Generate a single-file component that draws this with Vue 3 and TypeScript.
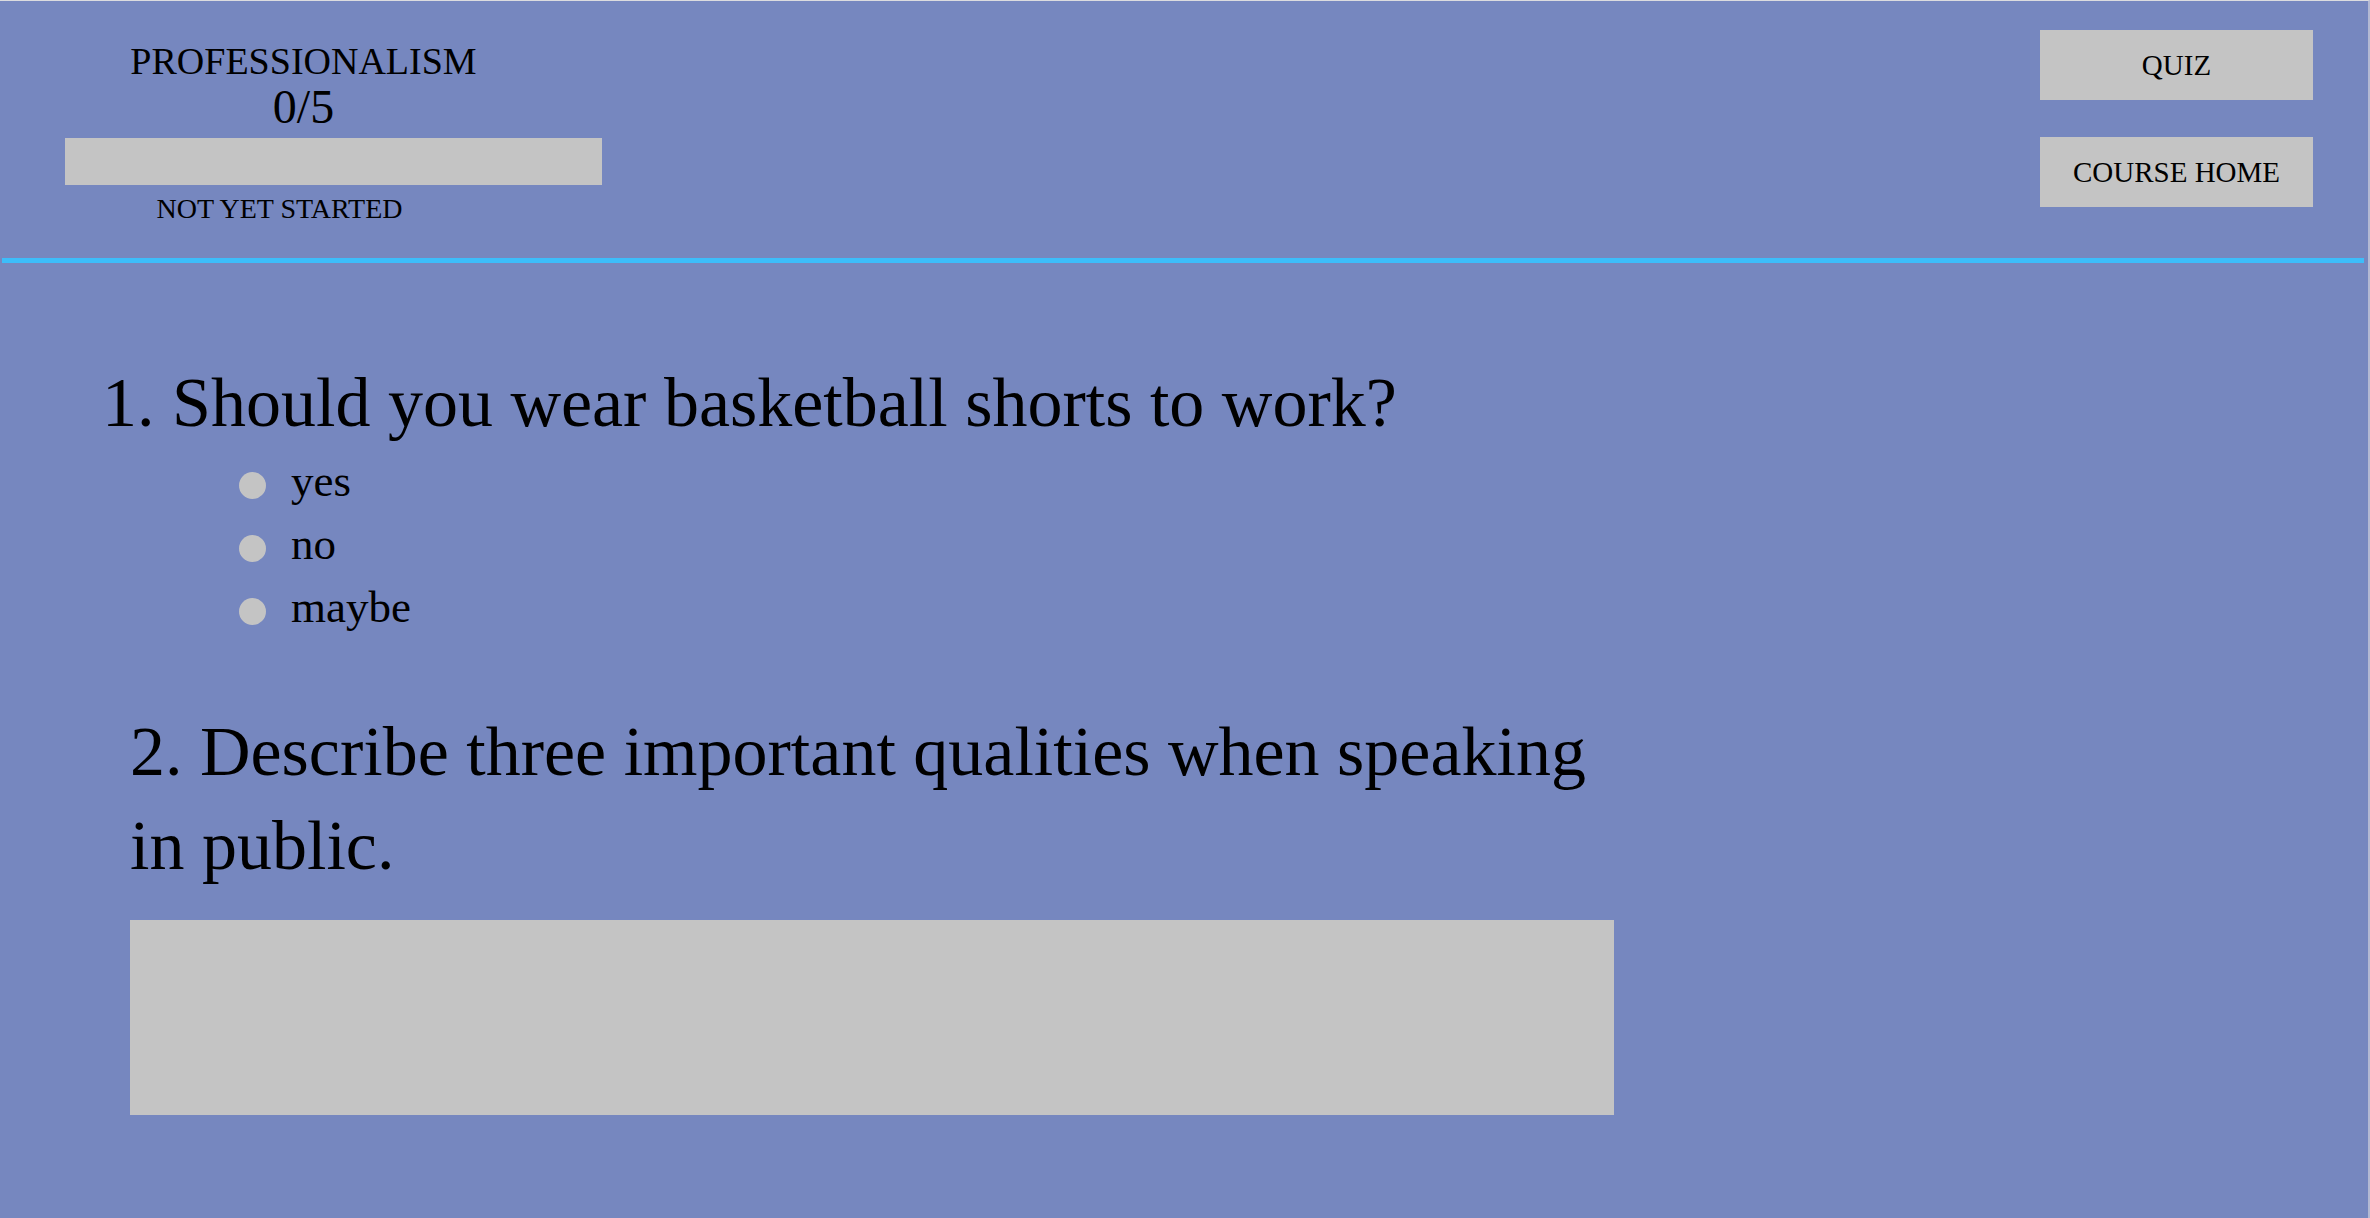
<script setup lang="ts">
import { ref } from 'vue'

const total = 5
const done = ref(0)
const options: string[] = ['yes', 'no', 'maybe']
const choice = ref('')
const answer = ref('')
</script>

<template>
  <div class="page">
    <header class="header">
      <section class="progress">
        <h1 class="title">PROFESSIONALISM</h1>
        <p class="score">{{ done }}/{{ total }}</p>
        <div class="bar" role="progressbar" aria-label="Course progress" :aria-valuenow="done" :aria-valuemax="total">
          <div class="fill" :style="{ width: (done / total) * 100 + '%' }"></div>
        </div>
        <p class="status">NOT YET STARTED</p>
      </section>
      <nav class="actions">
        <button type="button">QUIZ</button>
        <button type="button">COURSE HOME</button>
      </nav>
    </header>

    <main class="quiz">
      <fieldset class="choices">
        <legend class="question">1. Should you wear basketball shorts to work?</legend>
        <label v-for="option in options" :key="option" class="option">
          <input v-model="choice" type="radio" name="shorts" :value="option" />
          <span>{{ option }}</span>
        </label>
      </fieldset>

      <div class="written">
        <label class="question" for="qualities">2. Describe three important qualities when speaking in public.</label>
        <textarea id="qualities" v-model="answer"></textarea>
      </div>
    </main>
  </div>
</template>

<style>
body {
  margin: 0;
  background: #7687bf;
}
</style>

<style scoped>
.page {
  box-sizing: border-box;
  min-height: 100vh;
  border-top: 1px solid #dcdcdf;
  border-right: 2px solid #b3b9d3;
  background: #7687bf;
  color: #000;
  font-family: Redressed, "Liberation Serif", serif;
}

.header {
  display: flex;
  justify-content: space-between;
  align-items: flex-start;
  box-sizing: border-box;
  min-height: 262px;
  margin: 0 4px 0 2px;
  padding: 29px 51px 28px 63px;
  border-bottom: 5px solid #3dbdfa;
}

.progress {
  width: 537px;
  padding-top: 8px;
}

.title,
.score,
.status {
  margin: 0;
  font-weight: 400;
  text-align: center;
}

.title {
  padding-right: 60px;
  font-size: 38px;
  line-height: 46px;
}

.score {
  padding-right: 60px;
  font-size: 48px;
  line-height: 46px;
}

.bar {
  height: 47px;
  margin: 8px 0;
  background: #c4c4c4;
}

.fill {
  height: 100%;
  background: #3dbdfa;
}

.status {
  padding-right: 108px;
  font-size: 28px;
  line-height: 32px;
}

.actions {
  display: flex;
  flex-direction: column;
  gap: 37px;
  width: 273px;
}

.actions button {
  height: 70px;
  padding: 0;
  border: 0;
  border-radius: 0;
  background: #c4c4c4;
  color: inherit;
  font-family: inherit;
  font-size: 29px;
}

.quiz {
  padding: 93px 130px 102px 102px;
}

.choices {
  margin: 0;
  padding: 0;
  border: 0;
}

.question {
  display: block;
  padding: 0;
  font-size: 70px;
  line-height: 94px;
}

.option {
  display: flex;
  align-items: center;
  gap: 25px;
  width: fit-content;
  margin-left: 137px;
  font-size: 45px;
  line-height: 63px;
}

.option input {
  appearance: none;
  width: 27px;
  height: 27px;
  margin: 8px 0 0;
  border-radius: 50%;
  background: #c4c4c4;
}

.option input:checked {
  background: #000;
}

.written {
  max-width: 1484px;
  margin: 66px 0 0 28px;
}

.written textarea {
  display: block;
  box-sizing: border-box;
  width: 100%;
  height: 195px;
  margin: 27px 0 0;
  padding: 16px;
  border: 0;
  border-radius: 0;
  background: #c4c4c4;
  color: inherit;
  font-family: inherit;
  font-size: 45px;
  resize: none;
}
</style>
